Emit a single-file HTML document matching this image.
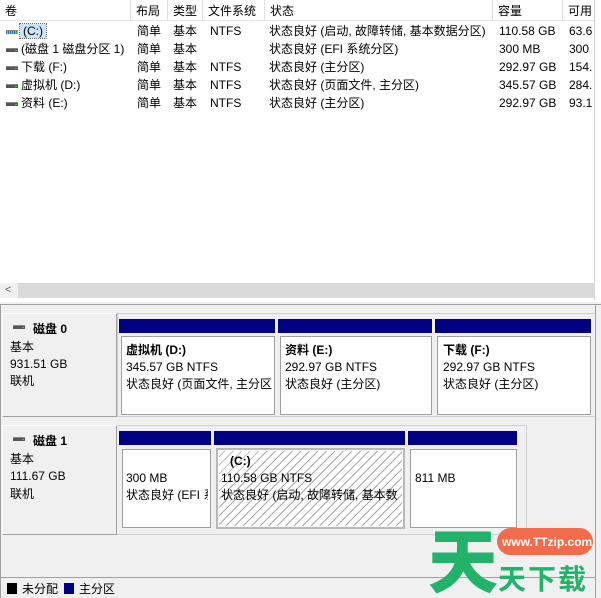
<!DOCTYPE html>
<html><head><meta charset="utf-8"><style>
*{margin:0;padding:0;box-sizing:border-box}
html,body{width:601px;height:598px;overflow:hidden}
body{background:#f0f0f0;font-family:"Liberation Sans","Noto Sans CJK SC",sans-serif;font-size:12px;line-height:14px;color:#000;position:relative}
.a{position:absolute;white-space:nowrap}
.top{position:absolute;left:0;top:0;width:601px;height:300px;background:#fff}
.hd{position:absolute;top:0;height:21px;border-right:1px solid #e0e0e0;border-bottom:1px solid #e5e5e5;padding:4px 0 0 5px;background:#fff}
.row{position:absolute;left:0;height:18px;width:595px}
.row span{position:absolute;top:2px;white-space:nowrap;line-height:14px}
.ico{position:absolute;left:6px;top:8px;width:12px;height:4px;background:#555;border-top:1px solid #888}
.ico::after{content:"";position:absolute;right:1px;top:1px;width:2px;height:1px;background:#3c3}
.bar{position:absolute;background:#000080}
.part{position:absolute;background:#fff;border:1px solid #a0a0a0;box-shadow:inset 0 0 0 1px #fff}
.lbl{position:absolute;left:2px;width:115px;background:#f0f0f0;border:1px solid #fff;border-right-color:#a0a0a0;border-bottom-color:#a0a0a0}
.b{font-weight:bold}
</style></head><body>
<div class="top">
<div class="hd" style="left:0;width:131px">卷</div>
<div class="hd" style="left:131px;width:37px">布局</div>
<div class="hd" style="left:168px;width:35px">类型</div>
<div class="hd" style="left:203px;width:62px">文件系统</div>
<div class="hd" style="left:265px;width:228px">状态</div>
<div class="hd" style="left:493px;width:70px">容量</div>
<div class="hd" style="left:563px;width:32px;overflow:hidden">可用</div>
<div style="position:absolute;left:594px;top:0;width:1px;height:300px;background:#d0d0d0"></div>

<div class="row" style="top:22px"><div class="ico" style="background:repeating-linear-gradient(90deg,#2a6fb0 0 1px,#8ab8e0 1px 2px)"></div><span style="left:20px;background:#cce4f7;padding:0 3px;outline:1px dotted #666">(C:)</span><span style="left:137px">简单</span><span style="left:173px">基本</span><span style="left:210px">NTFS</span><span style="left:269px">状态良好 (启动, 故障转储, 基本数据分区)</span><span style="left:499px">110.58 GB</span><span style="left:569px">63.6</span></div>
<div class="row" style="top:40px"><div class="ico"></div><span style="left:21px">(磁盘 1 磁盘分区 1)</span><span style="left:137px">简单</span><span style="left:173px">基本</span><span style="left:269px">状态良好 (EFI 系统分区)</span><span style="left:499px">300 MB</span><span style="left:569px">300</span></div>
<div class="row" style="top:58px"><div class="ico"></div><span style="left:21px">下载 (F:)</span><span style="left:137px">简单</span><span style="left:173px">基本</span><span style="left:210px">NTFS</span><span style="left:269px">状态良好 (主分区)</span><span style="left:499px">292.97 GB</span><span style="left:569px">154.</span></div>
<div class="row" style="top:76px"><div class="ico"></div><span style="left:21px">虚拟机 (D:)</span><span style="left:137px">简单</span><span style="left:173px">基本</span><span style="left:210px">NTFS</span><span style="left:269px">状态良好 (页面文件, 主分区)</span><span style="left:499px">345.57 GB</span><span style="left:569px">284.</span></div>
<div class="row" style="top:94px"><div class="ico"></div><span style="left:21px">资料 (E:)</span><span style="left:137px">简单</span><span style="left:173px">基本</span><span style="left:210px">NTFS</span><span style="left:269px">状态良好 (主分区)</span><span style="left:499px">292.97 GB</span><span style="left:569px">93.1</span></div>

<div style="position:absolute;left:0;top:283px;width:595px;height:15px;background:#f0f0f0"></div>
<div style="position:absolute;left:18px;top:283px;width:577px;height:15px;background:#dadada"></div>
<div class="a" style="left:5px;top:283px;font-size:11px;color:#606060">&lt;</div>
</div>
<div style="position:absolute;left:0;top:300px;width:601px;height:2px;background:#fff"></div>
<div style="position:absolute;left:0;top:304px;width:601px;height:1px;background:#a0a0a0"></div>
<div style="position:absolute;left:0;top:305px;width:1px;height:293px;background:#a0a0a0"></div>
<div style="position:absolute;left:595px;top:305px;width:1px;height:293px;background:#a0a0a0"></div>

<!-- disk 0 -->
<div class="lbl" style="top:313px;height:104px"></div>
<div class="ico" style="left:13px;top:325px"></div>
<div class="a b" style="left:33px;top:322px">磁盘 0</div>
<div class="a" style="left:10px;top:340px">基本</div>
<div class="a" style="left:10px;top:357px">931.51 GB</div>
<div class="a" style="left:10px;top:374px">联机</div>
<div style="position:absolute;left:117px;top:313px;width:478px;height:104px;border:1px solid #d0d0d0;border-right:none"></div>
<div class="bar" style="left:119px;top:319px;width:156px;height:14px"></div>
<div class="bar" style="left:278px;top:319px;width:154px;height:14px"></div>
<div class="bar" style="left:435px;top:319px;width:156px;height:14px"></div>
<div class="part" style="left:121px;top:336px;width:154px;height:79px"></div>
<div class="part" style="left:280px;top:336px;width:152px;height:79px"></div>
<div class="part" style="left:437px;top:336px;width:154px;height:79px"></div>
<div class="a b" style="left:126px;top:343px">虚拟机 (D:)</div>
<div class="a" style="left:126px;top:360px">345.57 GB NTFS</div>
<div class="a" style="left:126px;top:377px;width:146px;overflow:hidden">状态良好 (页面文件, 主分区</div>
<div class="a b" style="left:285px;top:343px">资料 (E:)</div>
<div class="a" style="left:285px;top:360px">292.97 GB NTFS</div>
<div class="a" style="left:285px;top:377px">状态良好 (主分区)</div>
<div class="a b" style="left:443px;top:343px">下载 (F:)</div>
<div class="a" style="left:443px;top:360px">292.97 GB NTFS</div>
<div class="a" style="left:443px;top:377px">状态良好 (主分区)</div>

<!-- disk 1 -->
<div class="lbl" style="top:425px;height:110px"></div>
<div class="ico" style="left:13px;top:437px"></div>
<div class="a b" style="left:33px;top:434px">磁盘 1</div>
<div class="a" style="left:10px;top:452px">基本</div>
<div class="a" style="left:10px;top:469px">111.67 GB</div>
<div class="a" style="left:10px;top:487px">联机</div>
<div style="position:absolute;left:117px;top:425px;width:410px;height:110px;border:1px solid #d0d0d0;border-left:none"></div>
<div class="bar" style="left:119px;top:431px;width:92px;height:14px"></div>
<div class="bar" style="left:214px;top:431px;width:191px;height:14px"></div>
<div class="bar" style="left:408px;top:431px;width:109px;height:14px"></div>
<div class="part" style="left:122px;top:449px;width:89px;height:79px"></div>
<div class="part" style="left:216px;top:448px;width:189px;height:81px;border:2px solid #b8b8b8;background:repeating-linear-gradient(135deg,#fff 0 5px,#a8a8a8 5px 6px)"></div>
<div class="part" style="left:410px;top:449px;width:107px;height:79px"></div>
<div class="a" style="left:126px;top:471px">300 MB</div>
<div class="a" style="left:126px;top:488px;width:82px;overflow:hidden">状态良好 (EFI 系</div>
<div class="a b" style="left:230px;top:454px">(C:)</div>
<div class="a" style="left:221px;top:471px">110.58 GB NTFS</div>
<div class="a" style="left:221px;top:488px;width:181px;overflow:hidden">状态良好 (启动, 故障转储, 基本数</div>
<div class="a" style="left:415px;top:471px">811 MB</div>

<!-- legend -->
<div style="position:absolute;left:1px;top:577px;width:594px;height:1px;background:#a0a0a0"></div>
<div style="position:absolute;left:7px;top:583px;width:10px;height:11px;background:#000"></div>
<div class="a" style="left:22px;top:582px">未分配</div>
<div style="position:absolute;left:64px;top:583px;width:10px;height:11px;background:#000080"></div>
<div class="a" style="left:79px;top:582px">主分区</div>

<!-- watermark -->
<div class="a" style="left:428px;top:520px;font-size:70px;line-height:76px;font-weight:900;color:#22b26a;font-family:'Noto Sans CJK SC',sans-serif">天</div>
<div style="position:absolute;left:497px;top:528px;width:96px;height:27px;border-radius:14px;background:#f26b4a"></div>
<div class="a" style="left:502px;top:535px;font-size:12px;font-weight:bold;color:#fff">www.TTzip.com</div>
<div class="a" style="left:498px;top:562px;font-size:28px;line-height:32px;font-weight:bold;color:#22b26a;letter-spacing:2px;font-family:'Noto Sans CJK SC',sans-serif">天下载</div>
</body></html>
